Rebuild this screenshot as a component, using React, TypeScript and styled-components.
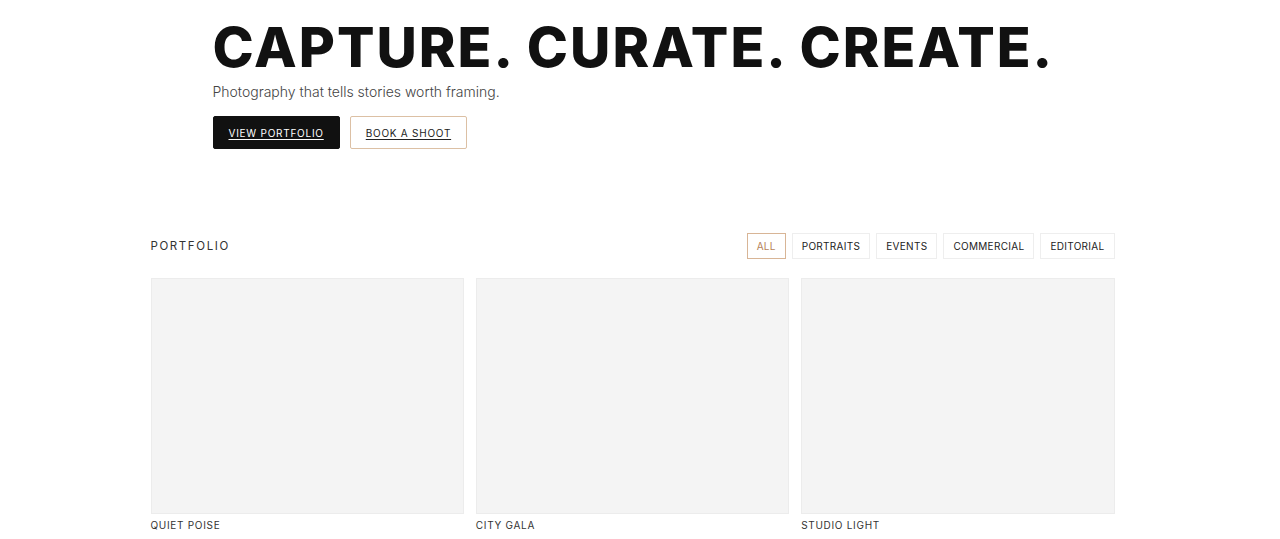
import React from 'react';
import styled, { createGlobalStyle } from 'styled-components';

const GlobalStyle = createGlobalStyle`
  html, body {
    margin: 0;
    padding: 0;
    background: #fff;
    font-family: Inter, "Liberation Sans", sans-serif;
    color: #111;
  }
`;

// right padding stands in for the scrollbar gutter of the original page
const Page = styled.main`
  padding: 0 15px 40px 0;
`;

const Hero = styled.section`
  max-width: 840px;
  margin: 0 auto;
  padding: 16px 0 0;
`;

const Headline = styled.h1`
  margin: 0;
  font-size: 55.5px;
  font-weight: 800;
  line-height: 1.1;
  letter-spacing: 2px;
  white-space: nowrap;
  color: #111;
`;

const Tagline = styled.p`
  margin: 6px 0 0;
  font-size: 14px;
  font-weight: 300;
  color: #444;
  letter-spacing: 0;
`;

const Actions = styled.div`
  display: flex;
  gap: 10px;
  margin-top: 16px;
`;

const Button = styled.a<{ $primary?: boolean }>`
  display: inline-flex;
  align-items: center;
  justify-content: center;
  height: 33px;
  padding: 0 15px;
  box-sizing: border-box;
  border-radius: 2px;
  font-size: 10px;
  font-weight: 400;
  letter-spacing: 0.75px;
  text-decoration: underline;
  text-underline-offset: 2px;
  cursor: pointer;
  color: ${p => (p.$primary ? '#fff' : '#222')};
  background: ${p => (p.$primary ? '#111' : '#fff')};
  border: 1px solid ${p => (p.$primary ? '#111' : '#dcc0a4')};
`;

const Portfolio = styled.section`
  max-width: 964px;
  margin: 84px auto 0;
`;

const PortfolioHeader = styled.div`
  display: flex;
  align-items: center;
  justify-content: space-between;
`;

const SectionLabel = styled.h2`
  margin: 0;
  font-size: 11.5px;
  font-weight: 400;
  letter-spacing: 1.6px;
  color: #333;
`;

const Filters = styled.div`
  display: flex;
  gap: 6px;
`;

const FilterButton = styled.button<{ $active?: boolean }>`
  height: 26px;
  padding: 0 9px;
  background: #fff;
  font-family: inherit;
  font-size: 10px;
  font-weight: 400;
  letter-spacing: 0.3px;
  cursor: pointer;
  color: ${p => (p.$active ? '#b5835a' : '#222')};
  border: 1px solid ${p => (p.$active ? '#d8b596' : '#eee')};
`;

const Grid = styled.div`
  display: grid;
  grid-template-columns: repeat(3, 1fr);
  gap: 12px;
  margin-top: 19px;
`;

const Card = styled.figure`
  margin: 0;
`;

const Photo = styled.div`
  height: 234px;
  background: #f4f4f4;
  border: 1px solid #ececec;
`;

const Caption = styled.figcaption`
  margin-top: 5px;
  font-size: 10px;
  letter-spacing: 0.7px;
  color: #333;
`;

const filters = ['ALL', 'PORTRAITS', 'EVENTS', 'COMMERCIAL', 'EDITORIAL'];
const works = ['QUIET POISE', 'CITY GALA', 'STUDIO LIGHT', 'NORTH SHORE', 'LINEN & LACE', 'AFTER HOURS'];

export default function App() {
  return (
    <Page>
      <GlobalStyle />
      <Hero>
        <Headline>CAPTURE. CURATE. CREATE.</Headline>
        <Tagline>Photography that tells stories worth framing.</Tagline>
        <Actions>
          <Button $primary>VIEW PORTFOLIO</Button>
          <Button>BOOK A SHOOT</Button>
        </Actions>
      </Hero>
      <Portfolio>
        <PortfolioHeader>
          <SectionLabel>PORTFOLIO</SectionLabel>
          <Filters>
            {filters.map((f, i) => (
              <FilterButton key={f} $active={i === 0}>{f}</FilterButton>
            ))}
          </Filters>
        </PortfolioHeader>
        <Grid>
          {works.map(w => (
            <Card key={w}>
              <Photo />
              <Caption>{w}</Caption>
            </Card>
          ))}
        </Grid>
      </Portfolio>
    </Page>
  );
}
